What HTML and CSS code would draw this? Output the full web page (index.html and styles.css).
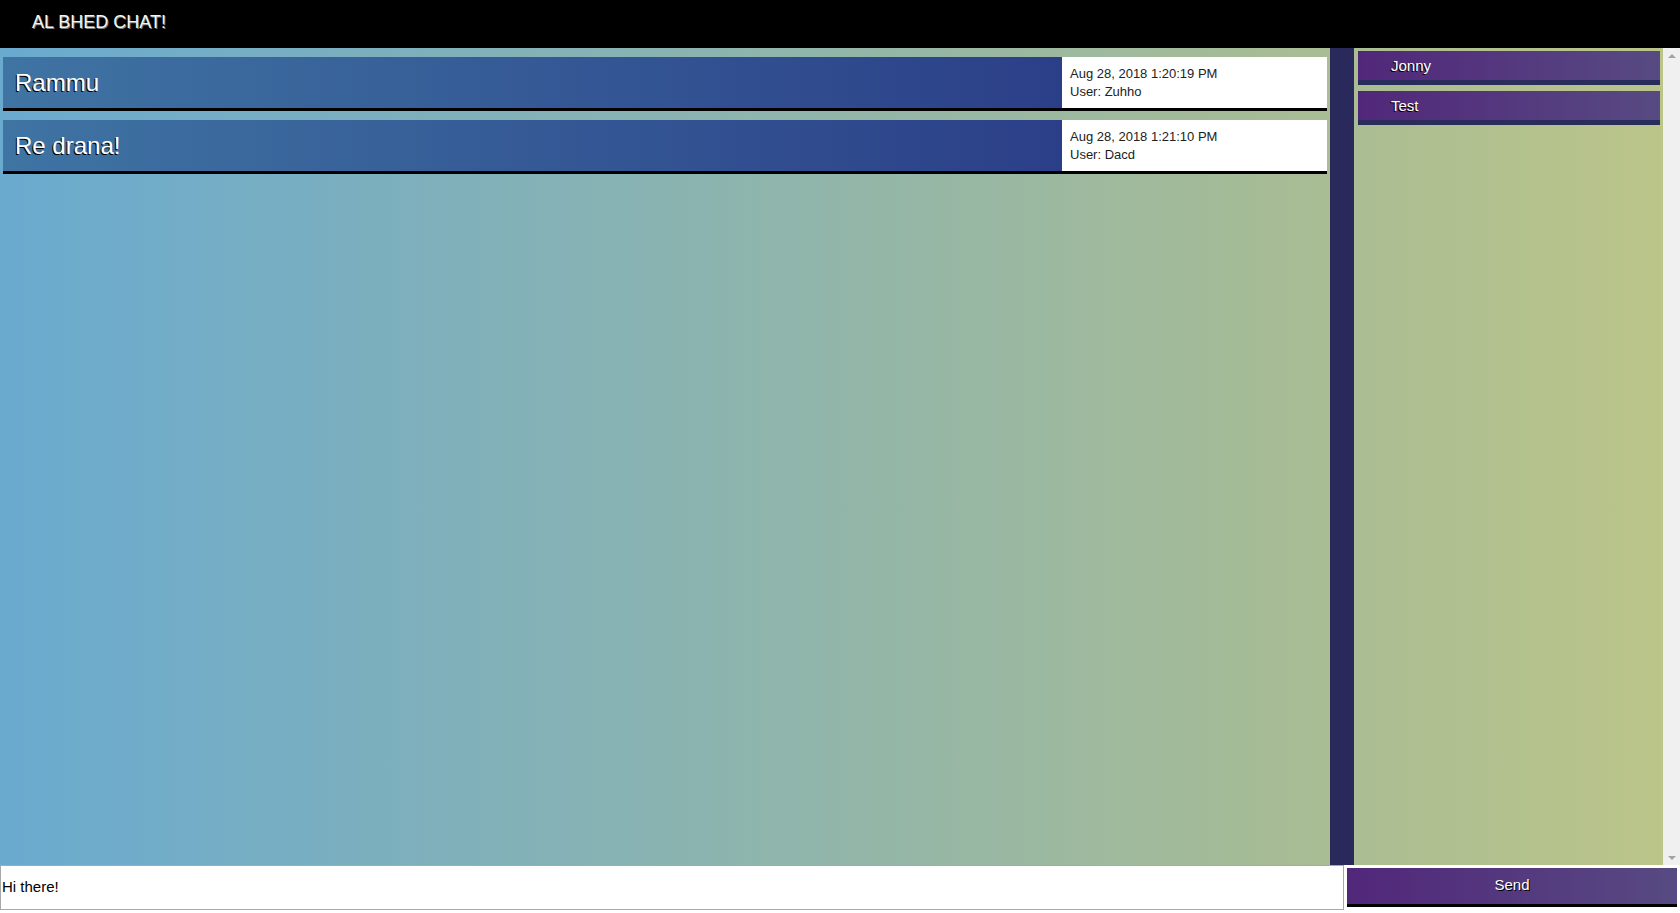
FILE: index.html
```html
<!DOCTYPE html>
<html>
<head>
<meta charset="utf-8">
<title>AL BHED CHAT!</title>
<link rel="stylesheet" href="styles.css">
</head>
<body>
<div class="app">
  <header class="header">AL BHED CHAT!</header>
  <div class="main">
    <section class="chat">
      <div class="message">
        <div class="message-text">Rammu</div>
        <div class="message-meta">
          <div>Aug 28, 2018 1:20:19 PM</div>
          <div>User: Zuhho</div>
        </div>
      </div>
      <div class="message">
        <div class="message-text">Re drana!</div>
        <div class="message-meta">
          <div>Aug 28, 2018 1:21:10 PM</div>
          <div>User: Dacd</div>
        </div>
      </div>
    </section>
    <div class="divider"></div>
    <aside class="users">
      <div class="user">Jonny</div>
      <div class="user">Test</div>
    </aside>
    <div class="scrollbar">
      <span class="arrow-up"></span>
      <span class="arrow-down"></span>
    </div>
  </div>
  <footer class="footer">
    <input class="msg-input" type="text" value="Hi there!">
    <button class="send">Send</button>
  </footer>
</div>
</body>
</html>
```

FILE: styles.css
```css
* { box-sizing: border-box; }

html, body {
  margin: 0;
  padding: 0;
  width: 1680px;
  height: 913px;
  overflow: hidden;
  font-family: "Liberation Sans", Arial, sans-serif;
  background: #fff;
}

.app {
  display: flex;
  flex-direction: column;
  height: 913px;
}

.header {
  height: 48px;
  flex: 0 0 48px;
  background: #000;
  color: #f4f4f4;
  font-size: 18px;
  display: flex;
  align-items: center;
  padding: 0 0 3px 32px;
  text-shadow: 1px 1px 0 #7a7a7a;
}

.main {
  height: 817px;
  flex: 0 0 817px;
  display: flex;
  background: linear-gradient(to right, #6aaacf 0%, #a8bc94 78%, #bcc589 100%);
}

.chat {
  width: 1330px;
  flex: 0 0 1330px;
  padding: 9px 3px 0 3px;
  display: flex;
  flex-direction: column;
  gap: 9px;
}

.message {
  display: flex;
  height: 54px;
  border-bottom: 3px solid #000;
}

.message-text {
  flex: 1;
  display: flex;
  align-items: center;
  padding-left: 12px;
  font-size: 24px;
  color: #fff;
  text-shadow: -1px 1px 0 #000;
  background: linear-gradient(to right, #3f74a3, #2b3f88);
}

.message-meta {
  width: 265px;
  flex: 0 0 265px;
  background: #fff;
  color: #222;
  font-size: 13px;
  line-height: 18px;
  padding: 8px 8px 0 8px;
}

.divider {
  width: 24px;
  flex: 0 0 24px;
  background: #292a5b;
}

.users {
  width: 309px;
  flex: 0 0 309px;
  padding: 3px 3px 0 4px;
  display: flex;
  flex-direction: column;
  gap: 6px;
}

.user {
  height: 34px;
  border-bottom: 5px solid #2a2c5c;
  background: linear-gradient(to right, #51277a, #574a82);
  color: #fff;
  font-size: 15px;
  display: flex;
  align-items: center;
  padding-left: 33px;
  text-shadow: -1px 1px 0 #000;
}

.scrollbar {
  width: 17px;
  flex: 0 0 17px;
  background: #f0f0f0;
  display: flex;
  flex-direction: column;
  justify-content: space-between;
  align-items: center;
  padding: 6px 0 5px;
}

.arrow-up {
  width: 0;
  height: 0;
  border-left: 4px solid transparent;
  border-right: 4px solid transparent;
  border-bottom: 4px solid #a3a3a3;
}

.arrow-down {
  width: 0;
  height: 0;
  border-left: 4px solid transparent;
  border-right: 4px solid transparent;
  border-top: 4px solid #a3a3a3;
}

.footer {
  height: 48px;
  flex: 0 0 48px;
  display: flex;
  gap: 3px;
  background: #fff;
}

.msg-input {
  width: 1344px;
  flex: 0 0 1344px;
  height: 45px;
  margin: 0;
  border: 1px solid #a9a9a9;
  padding: 0 0 2px 1px;
  font-family: "Liberation Sans", Arial, sans-serif;
  font-size: 15px;
  color: #000;
  background: #fff;
  outline: none;
}

.send {
  width: 330px;
  flex: 0 0 330px;
  height: 39px;
  margin: 3px 0 0 0;
  padding: 0 0 3px 0;
  border: none;
  border-bottom: 3px solid #000;
  background: linear-gradient(to right, #51277a, #574a82);
  color: #fff;
  font-family: "Liberation Sans", Arial, sans-serif;
  font-size: 15px;
  text-shadow: 1px 1px 0 #000;
  cursor: pointer;
}
```
